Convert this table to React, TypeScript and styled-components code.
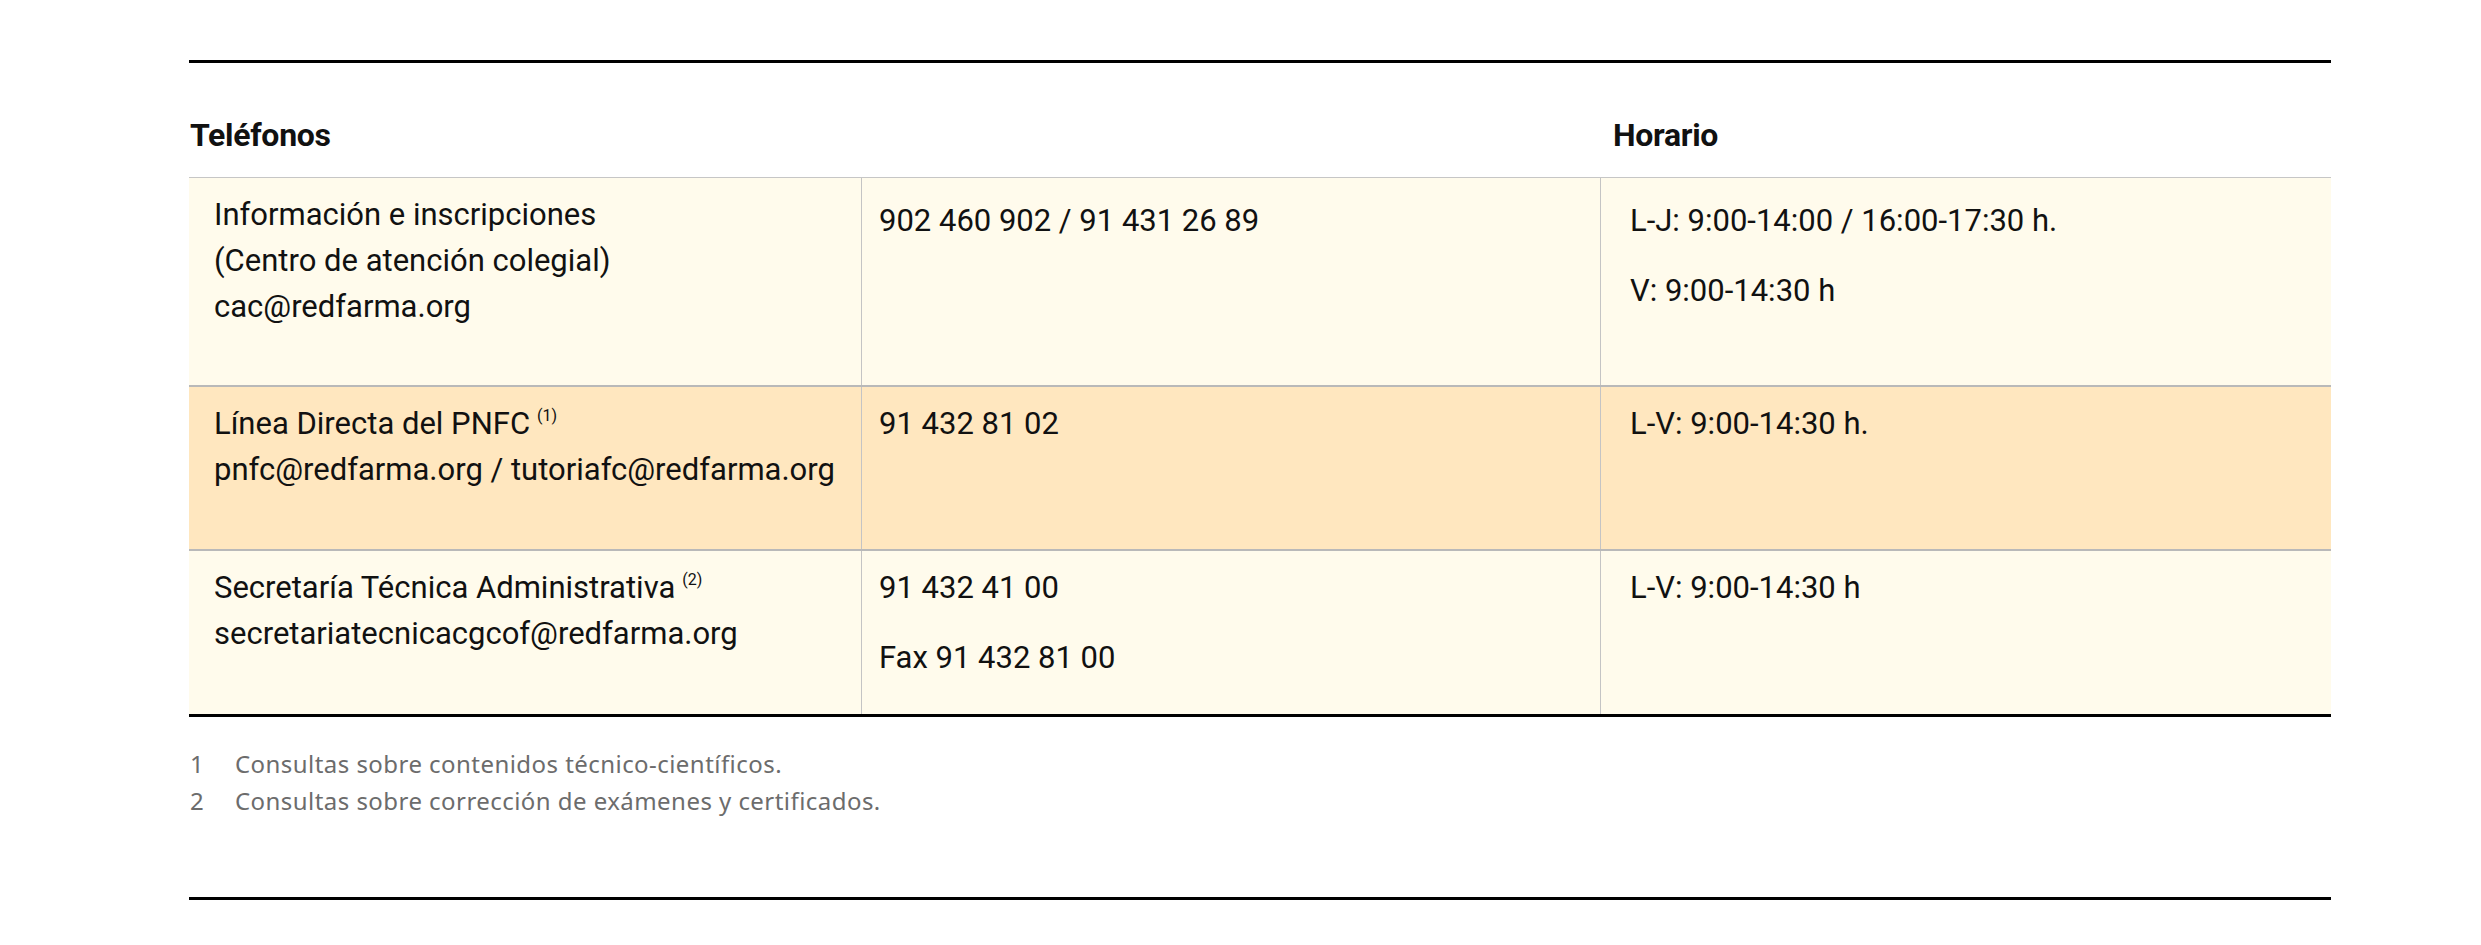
import styled, { createGlobalStyle } from "styled-components";

const GlobalStyle = createGlobalStyle`
  body {
    margin: 0;
    background: #ffffff;
    font-family: Roboto, "Liberation Sans", sans-serif;
    color: #111111;
  }
`;

const COLS = "672px 739px 731px";

const rows = [
  {
    tone: "light",
    height: 207,
    drop: 20,
    contact: ["Información e inscripciones", "(Centro de atención colegial)", "cac@redfarma.org"],
    note: "",
    phones: ["902 460 902 / 91 431 26 89"],
    hours: ["L-J: 9:00-14:00 / 16:00-17:30 h.", "V: 9:00-14:30 h"],
  },
  {
    tone: "warm",
    height: 162,
    drop: 14,
    contact: ["Línea Directa del PNFC", "pnfc@redfarma.org / tutoriafc@redfarma.org"],
    note: "(1)",
    phones: ["91 432 81 02"],
    hours: ["L-V: 9:00-14:30 h."],
  },
  {
    tone: "light",
    height: 163,
    drop: 14,
    contact: ["Secretaría Técnica Administrativa", "secretariatecnicacgcof@redfarma.org"],
    note: "(2)",
    phones: ["91 432 41 00", "Fax 91 432 81 00"],
    hours: ["L-V: 9:00-14:30 h"],
  },
];

const notes = [
  "Consultas sobre contenidos técnico-científicos.",
  "Consultas sobre corrección de exámenes y certificados.",
];

const App = () => {
  return (
    <>
      <GlobalStyle />
      <Page>
        <Rule />
        <HeadRow>
          <HeadCell span={2} indent={1}>Teléfonos</HeadCell>
          <HeadCell indent={13}>Horario</HeadCell>
        </HeadRow>
        <Table>
          {rows.map((row, index) => (
            <Row key={index} tone={row.tone} height={row.height} last={index === rows.length - 1}>
              <Cell top={14} left={25}>
                {row.contact.map((line, i) => (
                  <Line key={i}>
                    {line}
                    {i === 0 && row.note && <Note>{row.note}</Note>}
                  </Line>
                ))}
              </Cell>
              <Cell top={row.drop} left={17} divided>
                {row.phones.map((p, i) => (
                  <Para key={i}>{p}</Para>
                ))}
              </Cell>
              <Cell top={row.drop} left={29} divided>
                {row.hours.map((h, i) => (
                  <Para key={i}>{h}</Para>
                ))}
              </Cell>
            </Row>
          ))}
        </Table>
        <Notes>
          {notes.map((n, i) => (
            <NoteItem key={i}>
              <span className="num">{i + 1}</span>
              <span>{n}</span>
            </NoteItem>
          ))}
        </Notes>
        <Rule />
      </Page>
    </>
  );
};

export default App;

const Page = styled.div`
  display: flex;
  flex-direction: column;
  width: 2142px;
  padding: 60px 0 0 189px;
`;

const Rule = styled.div`
  height: 3px;
  background: #000000;
`;

const HeadRow = styled.div`
  display: grid;
  grid-template-columns: ${COLS};
  border-bottom: 1px solid #c6c6c6;
`;

const HeadCell = styled.div<{ span?: number; indent: number }>`
  grid-column: span ${(p) => p.span || 1};
  padding: 54px 0 23px ${(p) => p.indent}px;
  font-size: 32px;
  font-weight: 700;
  line-height: 37px;
  letter-spacing: -0.3px;
`;

const Table = styled.div`
  display: flex;
  flex-direction: column;
  border-bottom: 3px solid #000000;
`;

const Row = styled.div<{ tone: string; height: number; last?: boolean }>`
  display: grid;
  grid-template-columns: ${COLS};
  height: ${(p) => p.height}px;
  background: ${(p) => (p.tone === "warm" ? "#ffe7bf" : "#fffbec")};
  border-bottom: ${(p) => (p.last ? "none" : "2px solid #b9b9b9")};
`;

const Cell = styled.div<{ top: number; left: number; divided?: boolean }>`
  display: flex;
  flex-direction: column;
  gap: 24px;
  padding: ${(p) => p.top}px 8px 0 ${(p) => p.left}px;
  border-left: ${(p) => (p.divided ? "1px solid #c4c4c4" : "none")};
  font-size: 31px;
  line-height: 46px;
  white-space: nowrap;
`;

const Line = styled.div`
  margin-bottom: -24px;

  &:last-child {
    margin-bottom: 0;
  }
`;

const Para = styled.div``;

const Note = styled.sup`
  margin-left: 7px;
  font-size: 16px;
  line-height: 0;
  vertical-align: 13px;
`;

const Notes = styled.div`
  display: flex;
  flex-direction: column;
  margin: 28px 0 78px;
  color: #6c6c6c;
  font-family: "Noto Sans", Roboto, sans-serif;
  font-size: 24px;
  line-height: 37px;
  letter-spacing: 0.45px;
`;

const NoteItem = styled.div`
  display: flex;

  .num {
    width: 45px;
    padding-left: 1px;
    letter-spacing: 0;
  }
`;
